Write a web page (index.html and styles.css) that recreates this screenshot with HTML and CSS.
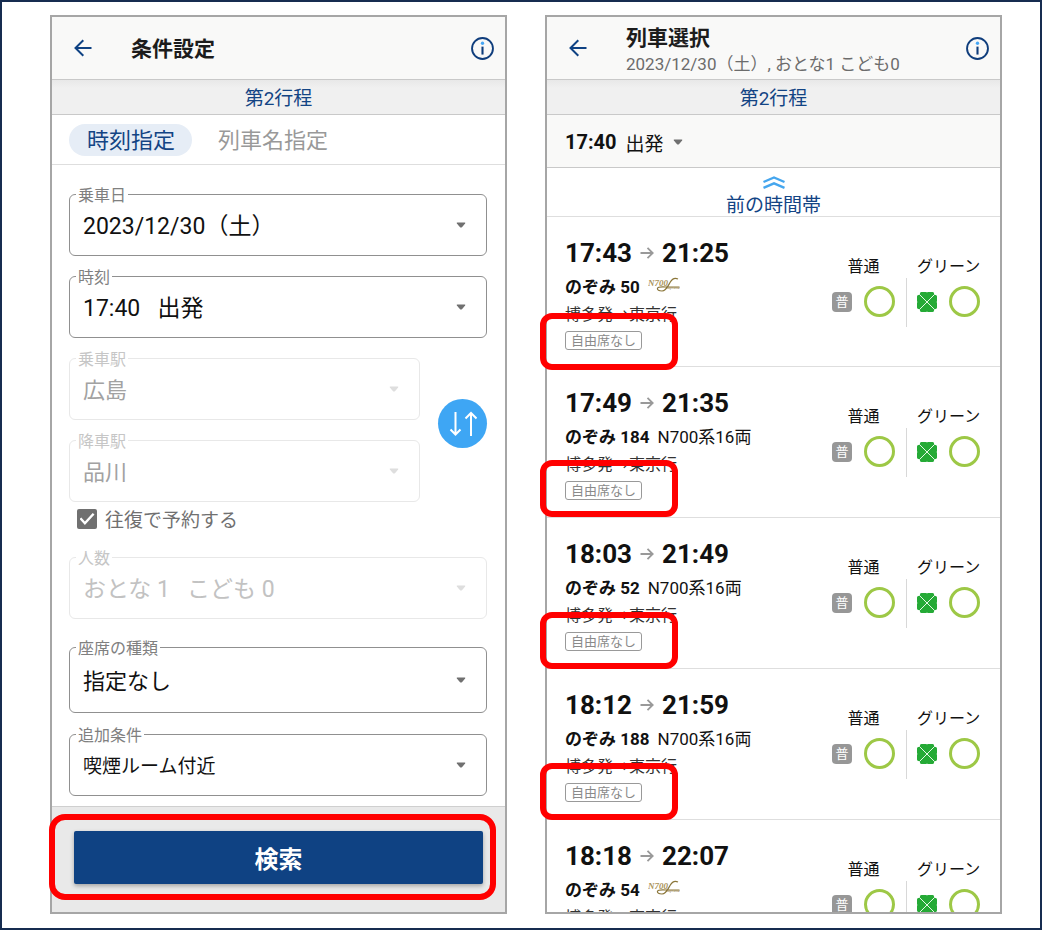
FILE: index.html
```html
<!DOCTYPE html>
<html lang="ja">
<head>
<meta charset="utf-8">
<meta name="viewport" content="width=device-width, initial-scale=1">
<title>列車予約</title>
<link rel="stylesheet" href="styles.css">
</head>
<body>
<svg class="defs" aria-hidden="true">
  <symbol id="back" viewBox="0 0 18 18"><path d="M17.5 9H1.5M9.3 1.2L1.5 9l7.8 7.8" fill="none" stroke="#0f4283" stroke-width="2"/></symbol>
  <symbol id="info" viewBox="0 0 22 22"><circle cx="11" cy="11" r="10" fill="none" stroke="#0f3d7c" stroke-width="1.8"/><circle cx="11" cy="6" r="1.6" fill="#45a6f5"/><path d="M11 9.2v7.6" stroke="#0f3d7c" stroke-width="2"/></symbol>
  <symbol id="caret" viewBox="0 0 10 6"><path d="M1.3 0.5h7.4q1 0 .4.9L6.2 4.9Q5 6 3.8 4.9L.9 1.4Q.3.5 1.3.5z" fill="currentColor"/></symbol>
  <symbol id="arrow" viewBox="0 0 14 12"><path d="M0.5 6h12M7.5 0.800L12.700 6l-5.200 5.200" fill="none" stroke="#999" stroke-width="1.800"/></symbol>
  <symbol id="clover" viewBox="0 0 20 20"><path d="M4.500 0h4.700l.8.5.8-.5h4.700q1.300 0 1.500 1.300l.2 1.500 1.500.2q1.300.2 1.300 1.500v4.700l-.5.8.5.8v4.700q0 1.300-1.300 1.500l-1.500.2-.2 1.500q-.2 1.300-1.500 1.300h-4.700l-.8-.5-.8.5H4.500q-1.300 0-1.500-1.300l-.2-1.500-1.500-.2Q0 16.800 0 15.500v-4.700l.5-.8-.5-.8V4.500Q0 3.200 1.300 3l1.500-.2L3 1.300Q3.200 0 4.500 0z" fill="#25aa36"/><path d="M2.500 2.500l15 15M17.500 2.500l-15 15" stroke="#e6f7e6" stroke-width="1"/></symbol>
</svg>
<div class="page">
  <section class="phone">
    <header class="bar">
      <button class="icon-btn" aria-label="戻る"><svg class="i-back"><use href="#back"/></svg></button>
      <h1 class="title">条件設定</h1>
      <button class="icon-btn" aria-label="情報"><svg class="i-info"><use href="#info"/></svg></button>
    </header>
    <div class="leg">第2行程</div>
    <nav class="tabs">
      <button class="tab tab-on">時刻指定</button>
      <button class="tab">列車名指定</button>
    </nav>
    <form class="form">
      <div class="field">
        <label for="date">乗車日</label>
        <select id="date" class="numeric"><option>2023/12/30（土）</option></select>
        <svg class="caret"><use href="#caret"/></svg>
      </div>
      <div class="field">
        <label for="time">時刻</label>
        <select id="time" class="numeric"><option>17:40&nbsp;&nbsp; 出発</option></select>
        <svg class="caret"><use href="#caret"/></svg>
      </div>
      <div class="stations">
        <div class="station-list">
          <div class="field off">
            <label for="from">乗車駅</label>
            <select id="from" disabled><option>広島</option></select>
            <svg class="caret"><use href="#caret"/></svg>
          </div>
          <div class="field off">
            <label for="to">降車駅</label>
            <select id="to" disabled><option>品川</option></select>
            <svg class="caret"><use href="#caret"/></svg>
          </div>
        </div>
        <button type="button" class="swap" aria-label="駅を入れ替える">
          <svg viewBox="0 0 28 28"><path d="M6.500 2v22M1.500 19.500l5 5 5-5M22 26V3M16.500 8.500L22 3l5.500 5.500" fill="none" stroke="#fff" stroke-width="2"/></svg>
        </button>
      </div>
      <div class="round">
        <input type="checkbox" id="round" checked>
        <label for="round">往復で予約する</label>
      </div>
      <div class="field off pale">
        <label for="people">人数</label>
        <select id="people" class="numeric" disabled><option>おとな 1&nbsp;&nbsp; こども 0</option></select>
        <svg class="caret"><use href="#caret"/></svg>
      </div>
      <div class="field seat">
        <label for="seat">座席の種類</label>
        <select id="seat"><option>指定なし</option></select>
        <svg class="caret"><use href="#caret"/></svg>
      </div>
      <div class="field extra">
        <label for="extra">追加条件</label>
        <select id="extra"><option>喫煙ルーム付近</option></select>
        <svg class="caret"><use href="#caret"/></svg>
      </div>
    </form>
    <footer class="foot">
      <div class="submit-wrap">
        <button class="submit">検索</button>
        <span class="mark mark-submit"></span>
      </div>
    </footer>
  </section>

  <section class="phone">
    <header class="bar">
      <button class="icon-btn" aria-label="戻る"><svg class="i-back"><use href="#back"/></svg></button>
      <div class="title title-two">
        <h1>列車選択</h1>
        <p>2023/12/30（土）, おとな1 こども0</p>
      </div>
      <button class="icon-btn" aria-label="情報"><svg class="i-info"><use href="#info"/></svg></button>
    </header>
    <div class="leg">第2行程</div>
    <button class="depart"><b>17:40</b><span>出発</span><svg class="i-caret"><use href="#caret"/></svg></button>
    <button class="prev">
      <svg viewBox="0 0 22 13"><path d="M0.500 6L11 1.500 21.500 6M0.500 11.800L11 7.300l10.500 4.500" fill="none" stroke="#45a6ee" stroke-width="2.400"/></svg>
      前の時間帯
    </button>
    <ul class="trains">
      <li class="train">
        <div class="info">
          <div class="times">17:43<svg><use href="#arrow"/></svg>21:25</div>
          <div class="name"><b>のぞみ 50</b><svg class="logo" viewBox="0 0 32 16"><text class="logo-n" x="0" y="9">N700</text><path d="M30 2c-3-1.500-6 0-8 3.500-2 3.500-4 8.500-8 8.500-3 0-5-1-4.500-2.700.5-1.800 4-1.300 8-1.300h14" fill="none" stroke="#8b7639" stroke-width="1.200"/><text class="logo-s" x="18" y="12">Supreme</text></svg></div>
          <div class="route">博多発→東京行</div>
          <div class="tag">自由席なし<span class="mark"></span></div>
        </div>
        <div class="class"><span>普通</span><div><i class="std">普</i><i class="ok"></i></div></div>
        <div class="class green"><span>グリーン</span><div><svg><use href="#clover"/></svg><i class="ok"></i></div></div>
      </li>
      <li class="train">
        <div class="info">
          <div class="times">17:49<svg><use href="#arrow"/></svg>21:35</div>
          <div class="name"><b>のぞみ 184</b><span>N700系16両</span></div>
          <div class="route">博多発→東京行</div>
          <div class="tag">自由席なし<span class="mark"></span></div>
        </div>
        <div class="class"><span>普通</span><div><i class="std">普</i><i class="ok"></i></div></div>
        <div class="class green"><span>グリーン</span><div><svg><use href="#clover"/></svg><i class="ok"></i></div></div>
      </li>
      <li class="train">
        <div class="info">
          <div class="times">18:03<svg><use href="#arrow"/></svg>21:49</div>
          <div class="name"><b>のぞみ 52</b><span>N700系16両</span></div>
          <div class="route">博多発→東京行</div>
          <div class="tag">自由席なし<span class="mark"></span></div>
        </div>
        <div class="class"><span>普通</span><div><i class="std">普</i><i class="ok"></i></div></div>
        <div class="class green"><span>グリーン</span><div><svg><use href="#clover"/></svg><i class="ok"></i></div></div>
      </li>
      <li class="train">
        <div class="info">
          <div class="times">18:12<svg><use href="#arrow"/></svg>21:59</div>
          <div class="name"><b>のぞみ 188</b><span>N700系16両</span></div>
          <div class="route">博多発→東京行</div>
          <div class="tag">自由席なし<span class="mark"></span></div>
        </div>
        <div class="class"><span>普通</span><div><i class="std">普</i><i class="ok"></i></div></div>
        <div class="class green"><span>グリーン</span><div><svg><use href="#clover"/></svg><i class="ok"></i></div></div>
      </li>
      <li class="train">
        <div class="info">
          <div class="times">18:18<svg><use href="#arrow"/></svg>22:07</div>
          <div class="name"><b>のぞみ 54</b><svg class="logo" viewBox="0 0 32 16"><text class="logo-n" x="0" y="9">N700</text><path d="M30 2c-3-1.500-6 0-8 3.500-2 3.500-4 8.500-8 8.500-3 0-5-1-4.500-2.700.5-1.800 4-1.300 8-1.300h14" fill="none" stroke="#8b7639" stroke-width="1.200"/><text class="logo-s" x="18" y="12">Supreme</text></svg></div>
          <div class="route">博多発→東京行</div>
        </div>
        <div class="class"><span>普通</span><div><i class="std">普</i><i class="ok"></i></div></div>
        <div class="class green"><span>グリーン</span><div><svg><use href="#clover"/></svg><i class="ok"></i></div></div>
      </li>
    </ul>
  </section>
</div>
</body>
</html>
```

FILE: styles.css
```css
* { box-sizing: border-box; }

body {
  margin: 0;
  background: #fff;
  color: #111;
  font-family: Roboto, "Noto Sans CJK JP", sans-serif;
}

h1, p, ul { margin: 0; padding: 0; }

button, select, input { font-family: inherit; color: inherit; }

button {
  border: 0;
  padding: 0;
  background: none;
}

svg { display: block; }

.defs {
  position: absolute;
  width: 0;
  height: 0;
}

.page {
  display: flex;
  gap: 38px;
  height: 100vh;
  padding: 13px 38px 14px 48px;
  border: 2px solid #162c50;
}

.phone {
  display: flex;
  flex: 1;
  flex-direction: column;
  min-width: 0;
  border: 2px solid #a6a6a6;
}

/* top bar */
.bar {
  display: flex;
  flex: none;
  align-items: center;
  height: 63px;
  padding: 0 11px 0 22px;
  border-bottom: 1px solid #c9c9c9;
  background: #f9f9f8;
}

.i-back { width: 18px; height: 18px; }
.i-info { width: 23px; height: 23px; }

.title {
  flex: 1;
  margin-left: 39px;
  padding-top: 2px;
  color: #1c1c1c;
}

.title-two { padding-top: 5px; }

.title, .title h1 {
  font-size: 21px;
  line-height: 26px;
  font-weight: 700;
}

.title p {
  font-size: 17px;
  line-height: 26px;
  font-weight: 400;
  color: #6c6c6c;
}

.leg {
  flex: none;
  height: 35px;
  padding-top: 2px;
  border-bottom: 1px solid #c9c9c9;
  background: linear-gradient(#e8e8e8, #f0f0f0 8px);
  color: #134484;
  font-size: 19px;
  line-height: 34px;
  text-align: center;
}

/* tabs */
.tabs {
  display: flex;
  flex: none;
  align-items: center;
  gap: 8px;
  height: 50px;
  padding-left: 17px;
  border-bottom: 1px solid #dedede;
}

.tab {
  height: 32px;
  padding: 2px 17px 0 18px;
  border-radius: 16px;
  color: #999;
  font-size: 22px;
  line-height: 30px;
}

.tab-on {
  background: #e6edf6;
  color: #134484;
}

/* search form */
.form {
  display: flex;
  flex: 1;
  flex-direction: column;
  padding: 29px 18px 10px 17px;
}

.field {
  position: relative;
  height: 62px;
  margin-bottom: 20px;
  color: #111;
}

.field label {
  position: absolute;
  top: -8px;
  left: 7px;
  padding: 0 2px;
  background: #fff;
  color: #808080;
  font-size: 16px;
  line-height: 20px;
}

.field select {
  appearance: none;
  width: 100%;
  height: 100%;
  padding: 3px 40px 0 13px;
  border: 1px solid #909090;
  border-radius: 6px;
  background: #fff;
  font-size: 22px;
  opacity: 1;
}

.field .numeric { font-size: 23px; }

.caret {
  position: absolute;
  top: 28px;
  right: 21px;
  width: 10px;
  height: 6px;
  color: #707070;
  pointer-events: none;
}

.field.off label { color: #c6c6c6; }
.field.off select { border-color: #e8e8e8; color: #a2a2a2; }
.off .caret { color: #dedede; }
.field.pale select { color: #c2c2c2; }

.stations {
  display: flex;
  align-items: flex-start;
  gap: 18px;
}

.station-list { flex: 1; }
.station-list .field:last-child { margin-bottom: 0; }

.swap {
  display: grid;
  place-items: center;
  width: 49px;
  height: 49px;
  margin-top: 41px;
  border-radius: 50%;
  background: #3ea6f4;
}

.swap svg { width: 28px; height: 28px; }

.round {
  display: flex;
  align-items: center;
  gap: 8px;
  height: 34px;
  margin: 0 0 21px 8px;
  color: #707070;
  font-size: 19px;
  line-height: 34px;
}

.round label { padding-top: 3px; }

.round input {
  appearance: none;
  width: 20px;
  height: 20px;
  margin: 0;
  border-radius: 2px;
  background: #707070;
  display: grid;
  place-items: center;
}

.round input::before {
  content: "";
  width: 15px;
  height: 12px;
  background: #fff;
  clip-path: polygon(0 50%, 12% 38%, 36% 70%, 88% 0, 100% 12%, 36% 100%);
}

.pale { margin-bottom: 28px; }
.seat { height: 66px; margin-bottom: 21px; }
.seat .caret { top: 30px; }
.extra { margin-bottom: 0; }
.field.extra select { font-size: 19px; }

.foot {
  flex: none;
  padding: 24px 22px 28px;
  border-top: 1px solid #cfcfcf;
  background: #e9e9e9;
}

.submit-wrap { position: relative; }

.submit {
  display: block;
  width: 100%;
  height: 53px;
  border-radius: 2px;
  background: #0f4283;
  box-shadow: 0 2px 4px rgba(0, 0, 0, 0.3);
  color: #fff;
  font-size: 24px;
  font-weight: 700;
}

/* red call-out frames */
.mark {
  position: absolute;
  z-index: 1;
  top: -21px;
  left: -26px;
  width: 138px;
  height: 57px;
  border: 6px solid #f00;
  border-radius: 12px;
  pointer-events: none;
}

.mark-submit {
  top: -17px;
  right: -13px;
  bottom: -16px;
  left: -25px;
  width: auto;
  height: auto;
  border-radius: 16px;
}

.train:first-child .mark { top: -19px; }
.train:nth-child(2) .mark { top: -22px; }

/* departure condition */
.depart {
  display: flex;
  flex: none;
  align-items: center;
  gap: 9px;
  height: 53px;
  padding: 2px 0 0 18px;
  border-bottom: 1px solid #c9c9c9;
  background: #f9f9f8;
  font-size: 19px;
}

.depart b { font-size: 20px; }
.i-caret { width: 10px; height: 6px; color: #707070; }

.prev {
  display: flex;
  flex: none;
  flex-direction: column;
  align-items: center;
  gap: 3px;
  height: 49px;
  padding-top: 8px;
  border-bottom: 1px solid #dedede;
  color: #134484;
  font-size: 19px;
  line-height: 28px;
}

.prev svg { flex: none; width: 22px; height: 13px; }

/* train list */
.trains {
  flex: 1;
  min-height: 0;
  overflow-x: visible;
  overflow-y: clip;
  list-style: none;
}

.train {
  display: flex;
  height: 151px;
  padding: 20px 19px 0 18px;
  border-bottom: 1px solid #dedede;
}

.train:first-child { height: 150px; }

.info { flex: 1; }

.times {
  display: flex;
  align-items: center;
  gap: 8px;
  font-size: 26px;
  line-height: 32px;
  font-weight: 700;
}

.times svg { width: 14px; height: 12px; }

.name {
  display: flex;
  align-items: center;
  gap: 8px;
  height: 32px;
  font-size: 17px;
}

.logo { width: 32px; height: 16px; }

.logo-n, .logo-s {
  font-family: "Liberation Serif", serif;
  font-style: italic;
}

.logo-n {
  fill: #ab935a;
  font-size: 9px;
  font-weight: 700;
}

.logo-s {
  fill: #8b7639;
  font-size: 4px;
}

.route {
  padding-top: 3px;
  color: #333;
  font-size: 16px;
  line-height: 22px;
}

.tag {
  position: relative;
  width: max-content;
  margin-top: 5px;
  padding: 0 5px;
  border: 1px solid #999;
  border-radius: 3px;
  color: #8a8a8a;
  font-size: 13px;
  line-height: 17px;
}

.class {
  width: 63px;
  margin-top: 19px;
  font-size: 16px;
  line-height: 22px;
  text-align: center;
  white-space: nowrap;
}

.class div {
  display: flex;
  align-items: center;
  justify-content: space-between;
  height: 31px;
  margin-top: 8px;
}

.class svg { width: 20px; height: 20px; }

.green {
  position: relative;
  margin: 19px 1px 0 22px;
}

.green::before {
  content: "";
  position: absolute;
  top: 22px;
  left: -11px;
  width: 1px;
  height: 49px;
  background: #d8d8d8;
}

.std {
  width: 20px;
  height: 20px;
  border-radius: 4px;
  background: #979797;
  color: #fff;
  font-size: 13px;
  line-height: 20px;
  font-style: normal;
}

.ok {
  width: 31px;
  height: 31px;
  border: 3px solid #9dc846;
  border-radius: 50%;
}
```
